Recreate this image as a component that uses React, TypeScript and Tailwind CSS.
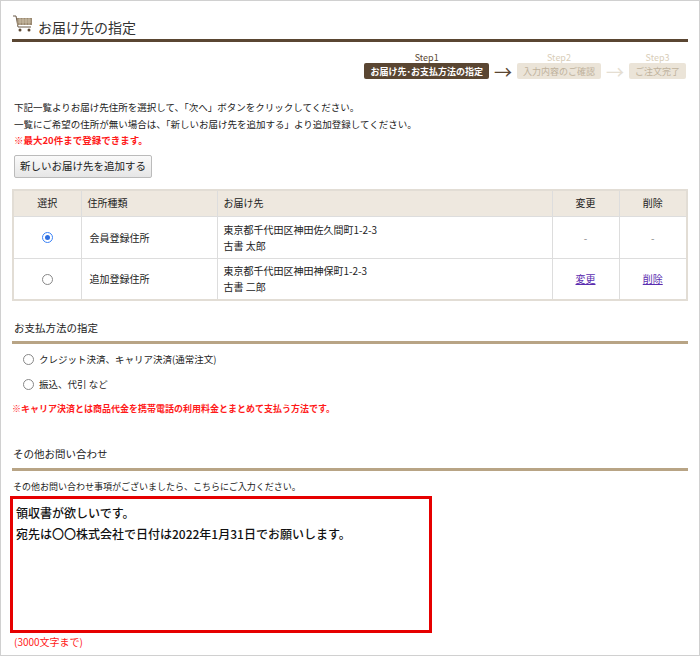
import React from "react";

const Radio = ({ checked }: { checked?: boolean }) => (
  <span className={`inline-block w-[11px] h-[11px] rounded-full border ${checked ? "border-[#3b82f6] bg-white" : "border-[#888] bg-white"} relative align-middle`}>
    {checked && <span className="absolute left-[2px] top-[2px] w-[5px] h-[5px] rounded-full bg-[#2f6fe0]" />}
  </span>
);

export default function App() {
  return (
    <div className="w-[700px] h-[656px] bg-white border border-[#d0d0d0] text-[#222] text-[10px] leading-none" style={{ fontFamily: '"Noto Sans CJK JP", "Noto Sans", sans-serif' }}>
      <div className="mx-[11px] pt-[8px]">
        <div className="flex items-end gap-[4px] h-[33px] pb-[5px] border-b-[3px] border-[#5a4632]">
          <svg width="22" height="20" viewBox="0 0 22 20">
            <path d="M1 2 L4 2 L6 13 L19 13" stroke="#6b5a48" strokeWidth="1" fill="none" />
            <rect x="5" y="4" width="15" height="7" fill="#9b8a72" />
            <path d="M6 6 H19 M6 8 H19 M8 4 V11 M11 4 V11 M14 4 V11 M17 4 V11" stroke="#d8cbb5" strokeWidth="0.7" />
            <circle cx="8" cy="16" r="1.5" fill="#5a4632" />
            <circle cx="17" cy="16" r="1.5" fill="#5a4632" />
          </svg>
          <span className="text-[14px] text-[#333]">お届け先の指定</span>
        </div>

        <div className="flex justify-end items-end mt-[11px] mr-[2px] gap-[5px]">
          <div className="flex flex-col items-center">
            <span className="text-[9px] text-[#5a4632] mb-[1px]">Step1</span>
            <span className="bg-[#5a4632] text-white text-[9px] font-bold px-[6px] h-[16px] flex items-center rounded-[2px]">お届け先･お支払方法の指定</span>
          </div>
          <span className="text-[18px] text-[#5a4632] leading-[16px] h-[16px]">→</span>
          <div className="flex flex-col items-center">
            <span className="text-[9px] text-[#d8cdb8] mb-[1px]">Step2</span>
            <span className="bg-[#ebe4d8] text-[#bfb29c] text-[9px] px-[6px] h-[16px] flex items-center rounded-[2px]">入力内容のご確認</span>
          </div>
          <span className="text-[18px] text-[#e5ded2] leading-[16px] h-[16px]">→</span>
          <div className="flex flex-col items-center">
            <span className="text-[9px] text-[#d8cdb8] mb-[1px]">Step3</span>
            <span className="bg-[#ebe4d8] text-[#bfb29c] text-[9px] px-[6px] h-[16px] flex items-center rounded-[2px]">ご注文完了</span>
          </div>
        </div>

        <div className="mt-[24px] pl-[2px] flex flex-col gap-[7px] text-[9.5px]">
          <p>下記一覧よりお届け先住所を選択して、「次へ」ボタンをクリックしてください。</p>
          <p>一覧にご希望の住所が無い場合は、「新しいお届け先を追加する」より追加登録してください。</p>
          <p className="text-[#ff1a1a] font-bold">※最大20件まで登録できます。</p>
        </div>
        <button className="mt-[9px] ml-[2px] h-[23px] px-[5px] text-[10.5px] border border-[#bbb] rounded-[2px] bg-gradient-to-b from-[#fafafa] to-[#e6e6e6]">新しいお届け先を追加する</button>

        <table className="mt-[11px] w-full border-collapse border-2 border-[#e2ddd5] text-[10px]">
          <thead>
            <tr className="bg-[#eee8df] h-[27px]">
              <th className="font-normal w-[68px] border border-[#ddd]">選択</th>
              <th className="font-normal text-left pl-[6px] w-[136px] border border-[#ddd]">住所種類</th>
              <th className="font-normal text-left pl-[6px] border border-[#ddd]">お届け先</th>
              <th className="font-normal w-[67px] border border-[#ddd]">変更</th>
              <th className="font-normal w-[68px] border border-[#ddd]">削除</th>
            </tr>
          </thead>
          <tbody>
            <tr className="h-[42px]">
              <td className="text-center border border-[#ddd]"><Radio checked /></td>
              <td className="pl-[8px] border border-[#ddd]">会員登録住所</td>
              <td className="pl-[6px] border border-[#ddd] leading-[16px]">東京都千代田区神田佐久間町1-2-3<br />古書 太郎</td>
              <td className="text-center border border-[#ddd] text-[#888]">-</td>
              <td className="text-center border border-[#ddd] text-[#888]">-</td>
            </tr>
            <tr className="h-[41px]">
              <td className="text-center border border-[#ddd]"><Radio /></td>
              <td className="pl-[8px] border border-[#ddd]">追加登録住所</td>
              <td className="pl-[6px] border border-[#ddd] leading-[16px]">東京都千代田区神田神保町1-2-3<br />古書 二郎</td>
              <td className="text-center border border-[#ddd]"><a className="text-[#5b2db0] underline">変更</a></td>
              <td className="text-center border border-[#ddd]"><a className="text-[#5b2db0] underline">削除</a></td>
            </tr>
          </tbody>
        </table>

        <div className="mt-[22px] pb-[8px] border-b-[3px] border-[#b8a485] text-[10.5px] pl-[2px]">お支払方法の指定</div>
        <div className="mt-[10px] pl-[11px] flex flex-col gap-[14px] text-[9.5px]">
          <div className="flex items-center gap-[5px]"><Radio />クレジット決済、キャリア決済(通常注文)</div>
          <div className="flex items-center gap-[5px]"><Radio />振込、代引 など</div>
        </div>
        <p className="mt-[14px] text-[#ff1a1a] font-bold text-[9px]">※キャリア決済とは商品代金を携帯電話の利用料金とまとめて支払う方法です。</p>

        <div className="mt-[36px] pb-[8px] border-b-[3px] border-[#b8a485] text-[10.5px] pl-[1px]">その他お問い合わせ</div>
        <p className="mt-[11px] text-[9px] pl-[1px]">その他お問い合わせ事項がございましたら、こちらにご入力ください。</p>
      </div>
      <div className="ml-[9px] mt-[5px] w-[422px] h-[137px] border-[3px] border-[#e60000] p-[3px] pt-[8px] text-[12px] font-medium text-[#111] flex flex-col gap-[9px]">
        <p>領収書が欲しいです。</p>
        <p>宛先は〇〇株式会社で日付は2022年1月31日でお願いします。</p>
      </div>
      <p className="ml-[13px] mt-[4px] text-[#ff1a1a] text-[10px]">(3000文字まで)</p>
    </div>
  );
}
